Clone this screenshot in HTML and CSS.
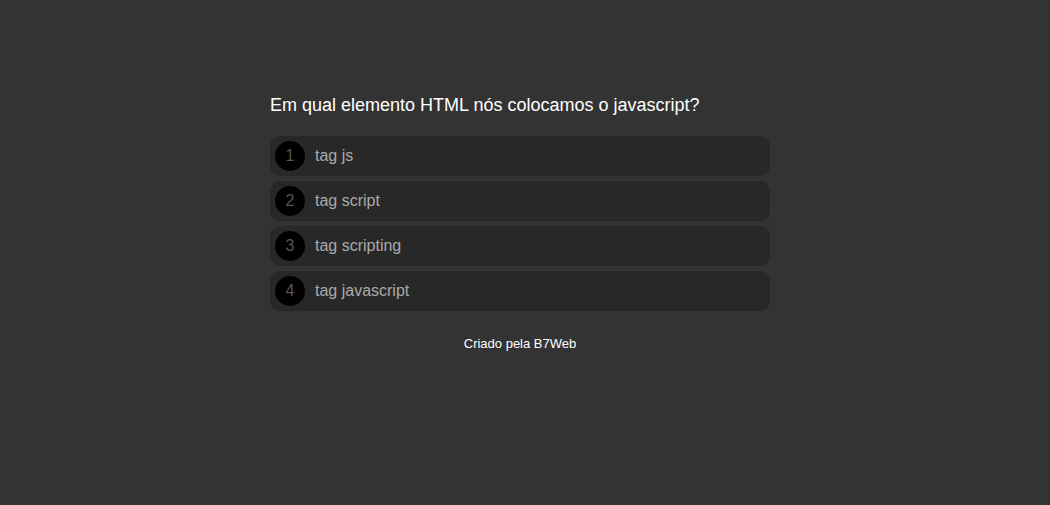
FILE: index.html
```html
<!DOCTYPE html>
<html lang="pt-BR">
<head>
<meta charset="UTF-8">
<link rel="stylesheet" href="styles.css">
</head>
<body>
<div class="container">
  <div class="question">Em qual elemento HTML nós colocamos o javascript?</div>
  <div class="options">
    <div class="option"><span class="num">1</span><span class="label">tag js</span></div>
    <div class="option"><span class="num">2</span><span class="label">tag script</span></div>
    <div class="option"><span class="num">3</span><span class="label">tag scripting</span></div>
    <div class="option"><span class="num">4</span><span class="label">tag javascript</span></div>
  </div>
  <div class="footer">Criado pela B7Web</div>
</div>
</body>
</html>
```
FILE: styles.css
```css
html, body {
  margin: 0;
  padding: 0;
  background: #333333;
  font-family: "Liberation Sans", Arial, sans-serif;
}
.container {
  width: 500px;
  margin-left: 270px;
  padding-top: 94px;
}
.question {
  color: #ffffff;
  font-size: 18px;
  line-height: 22px;
  margin-bottom: 20px;
}
.options {
  display: flex;
  flex-direction: column;
  gap: 5px;
}
.option {
  display: flex;
  align-items: center;
  height: 40px;
  background: #282828;
  border-radius: 10px;
  padding: 0 5px;
}
.num {
  width: 30px;
  height: 30px;
  border-radius: 50%;
  background: #000000;
  color: #555555;
  font-size: 16px;
  display: flex;
  align-items: center;
  justify-content: center;
  margin-right: 10px;
}
.label {
  color: #aaaaaa;
  font-size: 16px;
}
.footer {
  margin-top: 25px;
  text-align: center;
  color: #ffffff;
  font-size: 13px;
}
```
